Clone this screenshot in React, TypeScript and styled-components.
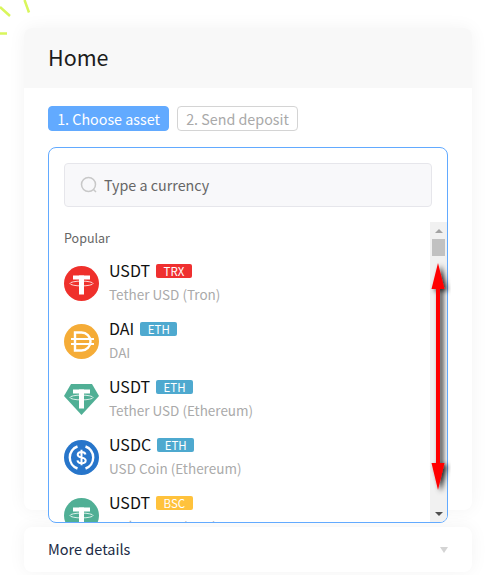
import React from "react";
import styled, { createGlobalStyle } from "styled-components";

const GlobalStyle = createGlobalStyle`
  html, body {
    margin: 0;
    padding: 0;
    background: #fff;
    font-family: "Noto Sans CJK SC", "Noto Sans", sans-serif;
  }
`;

const Page = styled.div`
  position: relative;
  width: 494px;
  height: 575px;
  overflow: hidden;
  box-sizing: border-box;
  padding: 28px 22px 0 24px;
`;

const Rays = styled.svg`
  position: absolute;
  left: 0;
  top: 0;
`;

const Card = styled.div`
  height: 482px;
  border-radius: 8px;
  background: #fff;
  box-shadow: 0 0 18px rgba(0, 0, 0, 0.05);
`;

const CardHeader = styled.div`
  height: 60px;
  box-sizing: border-box;
  padding: 0 24px 3px;
  display: flex;
  align-items: center;
  background: #f8f8f8;
  border-radius: 8px 8px 0 0;
  font-size: 21.5px;
  color: #1c1c1c;
`;

const CardBody = styled.div`
  padding: 18px 24px 0;
`;

const Steps = styled.div`
  display: flex;
  gap: 8px;
  margin-bottom: 16px;
`;

const Step = styled.div<{ $active?: boolean }>`
  width: ${(p) => (p.$active ? "121px" : "121px")};
  height: 25px;
  box-sizing: border-box;
  display: flex;
  align-items: center;
  justify-content: center;
  border-radius: 4px;
  font-size: 14.3px;
  background: ${(p) => (p.$active ? "#62aaff" : "#fff")};
  color: ${(p) => (p.$active ? "#fff" : "#a9a9a9")};
  border: 1px solid ${(p) => (p.$active ? "#62aaff" : "#d4d4d4")};
`;

const Dropdown = styled.div`
  position: relative;
  width: 400px;
  height: 376px;
  box-sizing: border-box;
  border: 1px solid #62aaff;
  border-radius: 8px;
  background: #fff;
  overflow: hidden;
`;

const SearchBox = styled.div`
  margin: 15px 15px 0;
  height: 44px;
  box-sizing: border-box;
  padding: 0 15px 1px;
  display: flex;
  align-items: center;
  gap: 6px;
  background: #f8f8fa;
  border: 1px solid #e6e6eb;
  border-radius: 4px;
  font-size: 14.3px;
  color: #666;
`;

const ListArea = styled.div`
  margin-top: 15px;
  height: 300px;
  display: flex;
`;

const List = styled.div`
  flex: 1;
  overflow: hidden;
  padding: 0 15px;
`;

const GroupLabel = styled.div`
  height: 32px;
  padding-bottom: 2px;
  box-sizing: border-box;
  display: flex;
  align-items: center;
  font-size: 12.5px;
  color: #666;
`;

const Row = styled.div`
  height: 58px;
  display: flex;
  align-items: center;
  gap: 10px;
`;

const CoinIcon = styled.svg`
  flex: none;
`;

const RowText = styled.div`
  display: flex;
  flex-direction: column;
  gap: 2px;
  margin-top: -2px;
`;

const NameLine = styled.div`
  display: flex;
  align-items: center;
  gap: 6px;
  height: 22px;
  font-size: 16px;
  color: #111;
`;

const Badge = styled.span<{ $color: string }>`
  height: 14px;
  margin-top: 2px;
  padding: 0 7.5px;
  display: flex;
  align-items: center;
  border-radius: 2px;
  font-size: 11.5px;
  color: #fff;
  background: ${(p) => p.$color};
`;

const SubName = styled.div`
  height: 22px;
  line-height: 22px;
  font-size: 13.5px;
  color: #aaa;
`;

const ScrollTrack = styled.div`
  width: 17px;
  flex: none;
  display: flex;
  flex-direction: column;
  align-items: center;
  background: #f1f1f1;
`;

const ScrollButton = styled.div`
  height: 17px;
  display: flex;
  align-items: center;
  justify-content: center;
`;

const ScrollThumb = styled.div`
  width: 13px;
  height: 17px;
  background: #c1c1c1;
`;

const ScrollSpace = styled.div`
  flex: 1;
`;

const Triangle = styled.div<{ $down?: boolean; $color: string }>`
  width: 0;
  height: 0;
  border-left: 4px solid transparent;
  border-right: 4px solid transparent;
  ${(p) =>
    p.$down
      ? `border-top: 4px solid ${p.$color};`
      : `border-bottom: 4px solid ${p.$color};`}
`;

const DetailsCard = styled.div`
  margin-top: 17px;
  height: 45px;
  box-sizing: border-box;
  padding: 0 24px 3px;
  display: flex;
  align-items: center;
  justify-content: space-between;
  background: #fff;
  border-radius: 8px;
  box-shadow: 0 0 18px rgba(0, 0, 0, 0.05);
  font-size: 14.5px;
  color: #1c2b45;
`;

const DetailsArrow = styled.div`
  width: 0;
  height: 0;
  margin-top: 3px;
  border-left: 4.5px solid transparent;
  border-right: 4.5px solid transparent;
  border-top: 6px solid #d4d4d4;
`;

const Annotation = styled.svg`
  position: absolute;
  left: 420px;
  top: 255px;
`;

function TetherMark() {
  return (
    <g fill="#fff">
      <rect x="9" y="9.5" width="17" height="4" />
      <rect x="15" y="9.5" width="5" height="19" />
      <ellipse cx="17.5" cy="17.5" rx="11.5" ry="2.4" fill="none" stroke="#fff" strokeWidth="0.8" />
    </g>
  );
}

function TetherIcon({ color }: { color: string }) {
  return (
    <CoinIcon width="35" height="35" viewBox="0 0 35 35">
      <circle cx="17.5" cy="17.5" r="17.5" fill={color} />
      <TetherMark />
    </CoinIcon>
  );
}

function TetherShieldIcon() {
  return (
    <CoinIcon width="35" height="35" viewBox="0 0 35 35">
      <path d="M7 2h21l7 12-17.5 19L0 14z" fill="#50af95" />
      <g transform="translate(0 -2)">
        <TetherMark />
      </g>
    </CoinIcon>
  );
}

function DaiIcon() {
  return (
    <CoinIcon width="35" height="35" viewBox="0 0 35 35">
      <circle cx="17.5" cy="17.5" r="17.5" fill="#f5ac37" />
      <path
        d="M11 8.5h6.500c5 0 9 4 9 9s-4 9-9 9H11z"
        fill="none"
        stroke="#fff"
        strokeWidth="2.400"
      />
      <path d="M7 15h23M7 20h23" stroke="#fff" strokeWidth="2" />
    </CoinIcon>
  );
}

function UsdcIcon() {
  return (
    <CoinIcon width="35" height="35" viewBox="0 0 35 35">
      <circle cx="17.5" cy="17.5" r="17.5" fill="#2775ca" />
      <path
        d="M13.500 6.500a11.700 11.700 0 0 0 0 22M21.500 6.500a11.700 11.700 0 0 1 0 22"
        fill="none"
        stroke="#fff"
        strokeWidth="2.400"
      />
      <path
        d="M21.500 14.500c-.4-1.700-2-2.500-4-2.500-2.200 0-3.800 1.100-3.800 2.800 0 4 8 1.700 8 5.600 0 1.800-1.800 2.800-4.100 2.800-2.300 0-3.900-1-4.200-2.800M17.500 9.700v15.600"
        fill="none"
        stroke="#fff"
        strokeWidth="2"
      />
    </CoinIcon>
  );
}

const coins = [
  { name: "USDT", badge: "TRX", color: "#ef3030", sub: "Tether USD (Tron)", icon: <TetherIcon color="#ef302b" /> },
  { name: "DAI", badge: "ETH", color: "#4ea9cf", sub: "DAI", icon: <DaiIcon /> },
  { name: "USDT", badge: "ETH", color: "#4ea9cf", sub: "Tether USD (Ethereum)", icon: <TetherShieldIcon /> },
  { name: "USDC", badge: "ETH", color: "#4ea9cf", sub: "USD Coin (Ethereum)", icon: <UsdcIcon /> },
  { name: "USDT", badge: "BSC", color: "#ffc23c", sub: "Tether USD (BSC)", icon: <TetherIcon color="#50af95" /> },
];

export default function App() {
  return (
    <Page>
      <GlobalStyle />
      <Rays width="40" height="40" viewBox="0 0 40 40">
        <path
          d="M24.500 0l4.500 12.500M0 7l10 9M0 33.500h7"
          stroke="#d9f65c"
          strokeWidth="2.500"
          fill="none"
        />
      </Rays>
      <Card>
        <CardHeader>Home</CardHeader>
        <CardBody>
          <Steps>
            <Step $active>1. Choose asset</Step>
            <Step>2. Send deposit</Step>
          </Steps>
          <Dropdown>
            <SearchBox>
              <svg width="18" height="18" viewBox="0 0 18 18" fill="none" stroke="#c8c8c8" strokeWidth="1.500">
                <circle cx="8.500" cy="8.500" r="7" />
                <path d="M13.500 13.500l2.500 2.500" />
              </svg>
              Type a currency
            </SearchBox>
            <ListArea>
              <List>
                <GroupLabel>Popular</GroupLabel>
                {coins.map((c, i) => (
                  <Row key={i}>
                    {c.icon}
                    <RowText>
                      <NameLine>
                        {c.name}
                        <Badge $color={c.color}>{c.badge}</Badge>
                      </NameLine>
                      <SubName>{c.sub}</SubName>
                    </RowText>
                  </Row>
                ))}
              </List>
              <ScrollTrack>
                <ScrollButton>
                  <Triangle $color="#a3a3a3" />
                </ScrollButton>
                <ScrollThumb />
                <ScrollSpace />
                <ScrollButton>
                  <Triangle $down $color="#505050" />
                </ScrollButton>
              </ScrollTrack>
            </ListArea>
          </Dropdown>
        </CardBody>
      </Card>
      <DetailsCard>
        More details
        <DetailsArrow />
      </DetailsCard>
      <Annotation width="40" height="245" viewBox="0 0 40 245">
        <defs>
          <filter id="arrowShadow" x="-50%" y="-10%" width="200%" height="120%">
            <feDropShadow dx="3" dy="2" stdDeviation="2.500" floodColor="#000" floodOpacity="0.85" />
          </filter>
        </defs>
        <path
          d="M18 8l6.500 26H20v174h4.500L18 235l-6.500-27H16V34H11.500z"
          fill="#f00"
          filter="url(#arrowShadow)"
        />
      </Annotation>
    </Page>
  );
}
